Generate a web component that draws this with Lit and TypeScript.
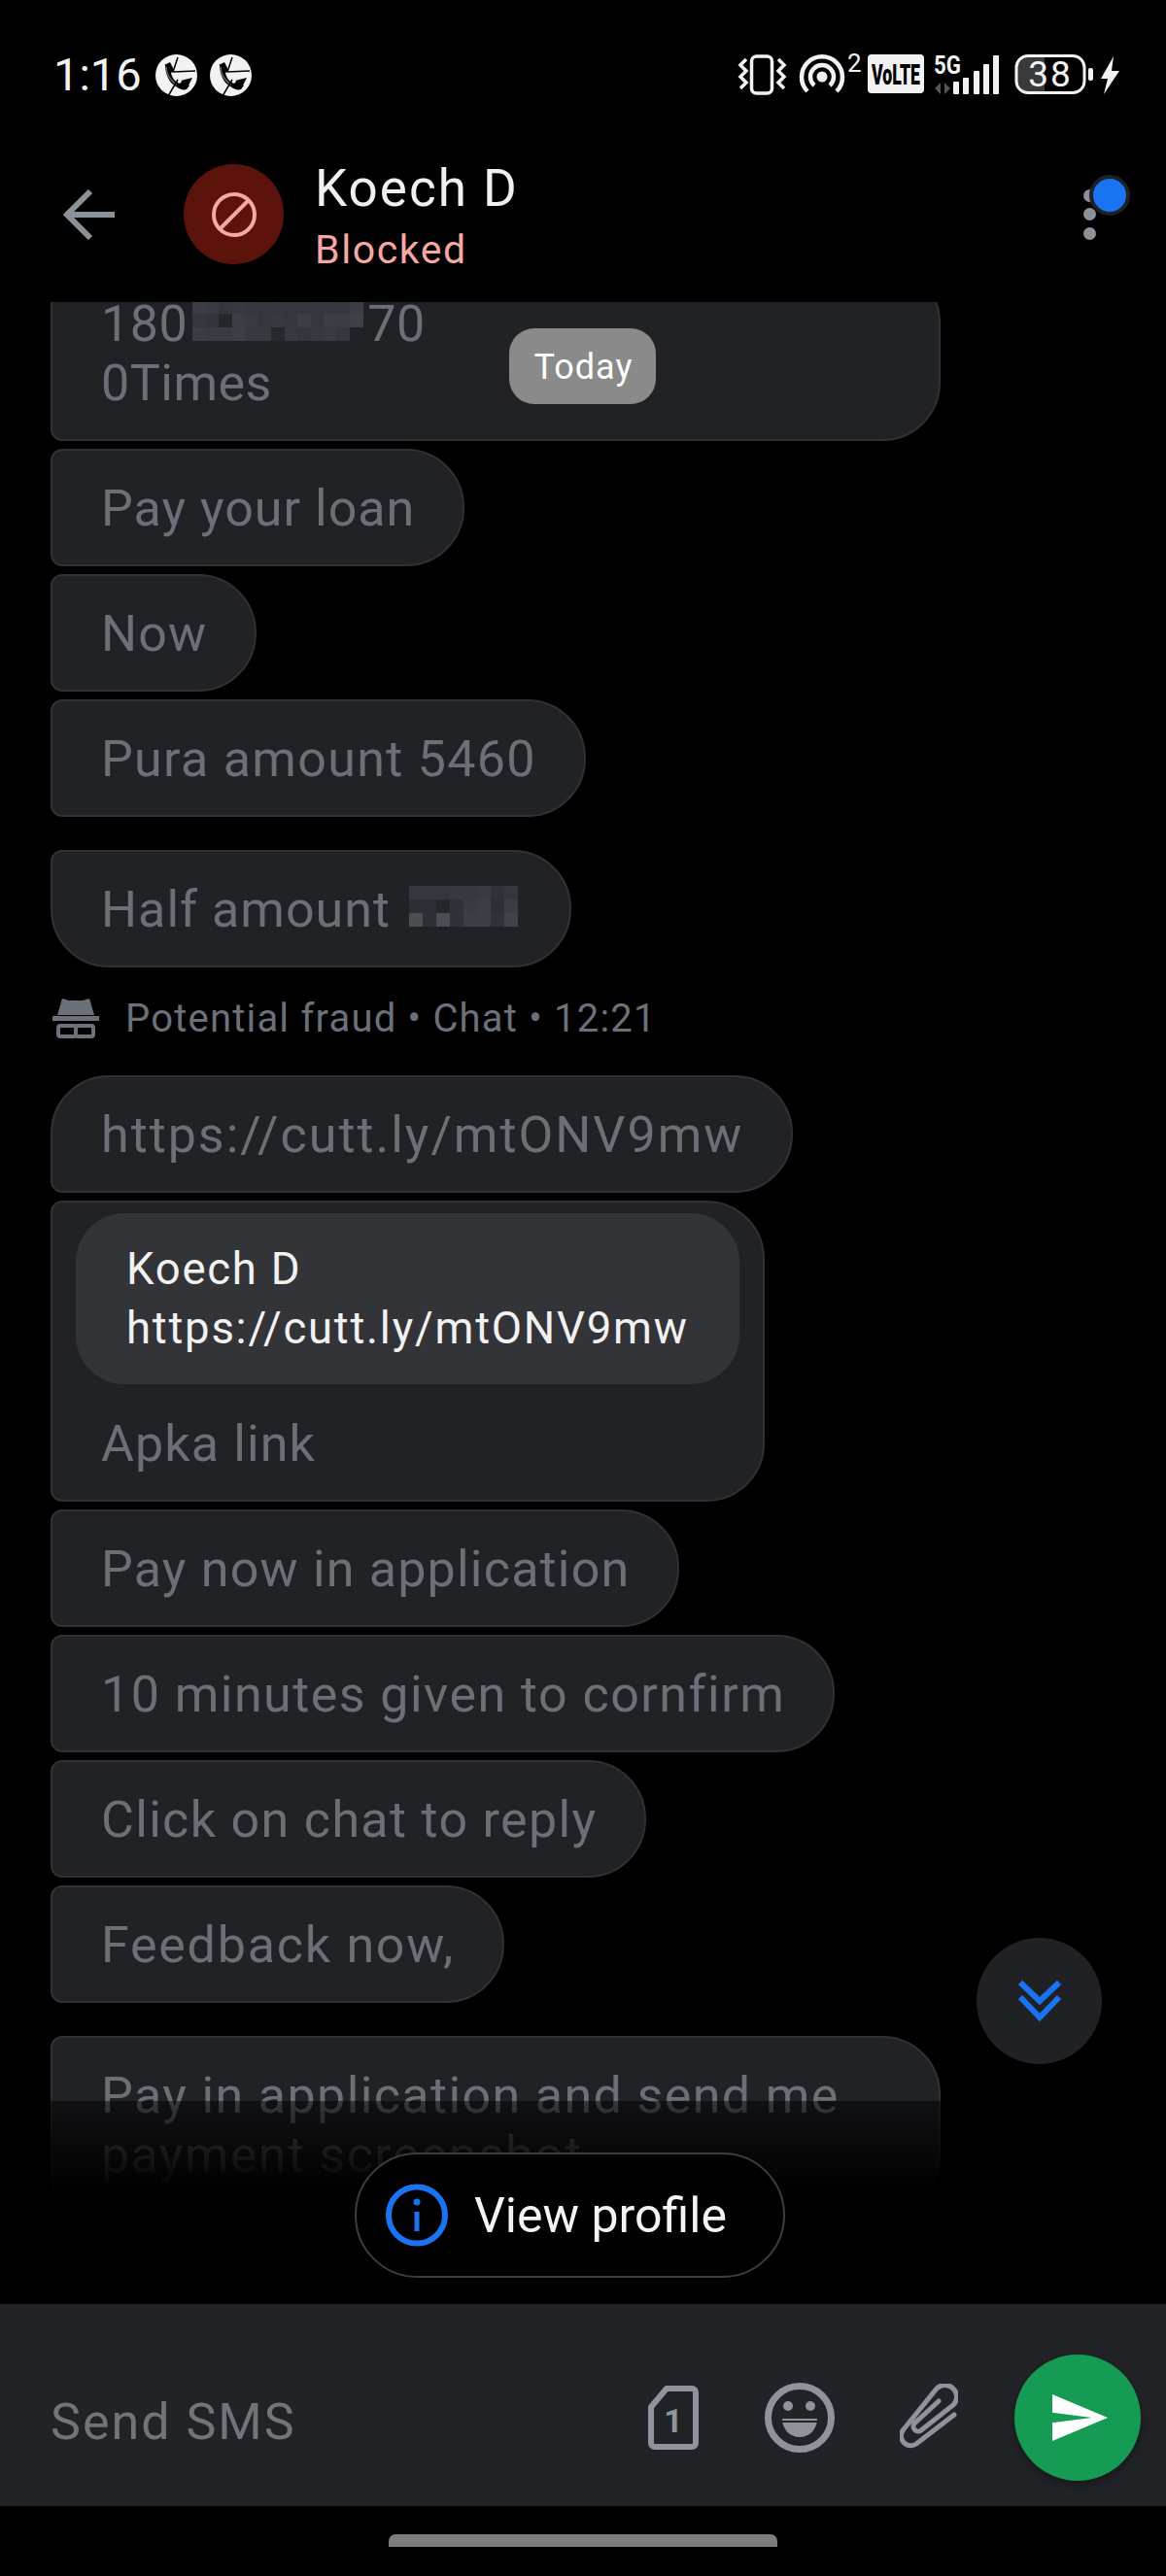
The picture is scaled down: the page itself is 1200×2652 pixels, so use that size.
import { LitElement, html, svg, css } from 'lit';
import { customElement } from 'lit/decorators.js';

type Shape = 'mid' | 'last' | 'first';

const MOSAIC_LONG = [
  '#3a3d44 #383b42 #34373d #36393f #34373d #33363c #34373d #33363c #33363c #34373d #34373d #33363c #3a3d44',
  '#34373d #33353a #26272b #3b3e45 #383b42 #33363c #36393f #33363c #3b3e45 #33363c #3b3e45 #3a3d44 #3e4148',
  '#3a3d44 #383b42 #383b42 #3b3e45 #36393f #36393f #26282c #36393f #33363c #36393f #383b42 #34373d #202226',
];
const MOSAIC_SHORT = [
  '#34373d #34373d #33363c #36393f #36393f #383b42 #2f3238 #33363c',
  '#2b2e33 #2d2f34 #26272b #2f3238 #383b42 #3b3e45 #2d2f34 #3a3d44',
  '#4a4e55 #2d2f34 #4a4e55 #2f3238 #3b3e45 #3b3e45 #2f3238 #40434a',
];

// redacted digits in the screenshot, drawn as a grid of flat cells
function mosaic(rows: string[], width: number) {
  const cells = rows.map((r) => r.split(' '));
  const w = cells[0].length * 14;
  return html`<svg class="mosaic" width=${width} height="42" viewBox="0 0 ${w} 42" preserveAspectRatio="none" shape-rendering="crispEdges">
    ${cells.map((row, y) =>
      row.map((c, x) => svg`<rect x=${x * 14} y=${y * 14} width="14" height="14" fill=${c}></rect>`)
    )}
  </svg>`;
}

const callIcon = html`<svg width="43" height="43" viewBox="0 0 43 43">
  <circle cx="21.5" cy="21.5" r="21.5" fill="#f2f2f2"></circle>
  <path d="M9 11l6-3 4 8-3 3c1 5 4 9 9 11l3-3 7 5-3 4c-3 1-7 0-11-3-7-4-11-13-11-22z" fill="#000"></path>
  <path d="M11 13c0 7 5 15 11 18" fill="none" stroke="#f2f2f2" stroke-width="1.5" opacity="0.4"></path>
  <path d="M23 3l-5 15 23-1M23 26L13 43" fill="none" stroke="#000" stroke-width="1.5"></path>
  <path d="M26 27l12-3-4 8z" fill="#000"></path>
</svg>`;

@customElement('app-root')
export class AppRoot extends LitElement {
  static styles = css`
    :host {
      display: flex;
      flex-direction: column;
      width: 1200px;
      height: 2652px;
      background: #000;
      overflow: hidden;
      font-family: Roboto, 'Noto Sans', sans-serif;
    }

    .status {
      height: 130px;
      flex: none;
      display: flex;
      align-items: flex-start;
      justify-content: space-between;
      padding: 55px 41px 0 55px;
      box-sizing: border-box;
      color: #f2f2f2;
    }
    .status-left {
      display: flex;
      align-items: center;
      gap: 13px;
      height: 44px;
    }
    .time {
      font-size: 47px;
      line-height: 44px;
      margin-right: 1px;
    }

    .header {
      height: 181px;
      flex: none;
      display: flex;
      align-items: center;
      padding-left: 65px;
      box-sizing: border-box;
      position: relative;
    }
    .avatar {
      width: 103px;
      height: 103px;
      border-radius: 50%;
      background: #5c130c;
      display: flex;
      align-items: center;
      justify-content: center;
      margin: 0 32px 0 71px;
    }
    .title {
      padding-top: 6px;
    }
    .name {
      font-size: 53px;
      line-height: 60px;
      letter-spacing: 2px;
      color: #f1f1f1;
    }
    .blocked {
      font-size: 41px;
      line-height: 54px;
      margin-top: 6px;
      color: #f5a9a0;
      letter-spacing: 1.6px;
    }
    .menu {
      position: absolute;
      right: 0;
      top: 0;
      width: 100px;
      height: 130px;
    }
    .dot {
      position: absolute;
      left: 15px;
      width: 13px;
      height: 13px;
      border-radius: 50%;
      background: #8b9299;
    }
    .badge {
      position: absolute;
      left: 21px;
      top: 50px;
      width: 34px;
      height: 34px;
      border-radius: 50%;
      background: #1a73f0;
      border: 4px solid #1f2125;
    }

    .messages {
      flex: 1;
      min-height: 0;
      position: relative;
      overflow: hidden;
    }
    .list {
      display: flex;
      flex-direction: column;
      align-items: flex-start;
      gap: 8px;
      padding-left: 52px;
      margin-top: -39px;
    }
    .bubble {
      box-sizing: border-box;
      background: #202226;
      border: 2px solid #303134;
      padding: 29px 49px 27px 50px;
      font-size: 52px;
      line-height: 61px;
      letter-spacing: 1.1px;
      color: #6b7078;
      white-space: nowrap;
      border-radius: 12px 60px 60px 12px;
    }
    .bubble.first {
      border-radius: 60px 60px 60px 12px;
    }
    .bubble.last {
      border-radius: 12px 60px 60px 60px;
      margin-top: 26px;
    }
    .bubble.wide {
      width: 916px;
    }
    .bubble.tail {
      margin-top: 26px;
    }
    .bubble.reply {
      padding: 11px 24px 27px 24px;
    }
    .quote {
      background: #333437;
      border-radius: 50px;
      padding: 27px 52px 27px 52px;
      margin-bottom: 31px;
      font-size: 45.5px;
      letter-spacing: 1.75px;
      color: #f1f1f1;
    }
    .reply-text {
      padding-left: 26px;
    }
    .mosaic {
      margin: 0 4px 0 5px;
    }
    .label {
      display: flex;
      align-items: center;
      gap: 27px;
      height: 48px;
      margin: 20px 0 27px 2px;
      font-size: 40px;
      letter-spacing: 1.2px;
      color: #6c7179;
    }

    .today {
      position: absolute;
      left: 524px;
      top: 27px;
      width: 151px;
      height: 78px;
      box-sizing: border-box;
      padding: 2px 0 0 2px;
      border-radius: 26px;
      background: #8a8a8a;
      color: #fff;
      font-size: 36px;
      letter-spacing: 1px;
      display: flex;
      align-items: center;
      justify-content: center;
    }
    .fade {
      position: absolute;
      left: 0;
      right: 0;
      top: 1852px;
      height: 209px;
      background: linear-gradient(rgba(0, 0, 0, 0.5), #000 95px);
    }
    .scroll-down {
      position: absolute;
      left: 1005px;
      top: 1684px;
      width: 129px;
      height: 130px;
      border-radius: 50%;
      background: #1f2125;
      display: flex;
      align-items: center;
      justify-content: center;
    }
    .profile {
      position: absolute;
      left: 365px;
      top: 1905px;
      width: 443px;
      height: 129px;
      box-sizing: border-box;
      background: #000;
      border: 2px solid #3c3d3f;
      border-radius: 65px;
      display: flex;
      align-items: center;
      gap: 27px;
      padding-left: 30px;
      color: #f4f4f4;
      font-size: 50px;
    }

    .composer {
      height: 208px;
      flex: none;
      box-sizing: border-box;
      background: #212327;
      display: flex;
      align-items: center;
      padding: 26px 26px 0 52px;
    }
    .placeholder {
      flex: 1;
      font-size: 52px;
      letter-spacing: 2px;
      color: #70757c;
      margin-top: 8px;
    }
    .sim {
      margin-right: 68px;
    }
    .emoji {
      margin-right: 67px;
    }
    .clip {
      margin-right: 58px;
    }
    .send {
      width: 130px;
      height: 130px;
      border-radius: 50%;
      background: #169b54;
      box-shadow: 0 4px 10px rgba(0, 0, 0, 0.35);
      display: flex;
      align-items: center;
      justify-content: center;
      padding-left: 4px;
      box-sizing: border-box;
    }
    .nav {
      height: 72px;
      flex: none;
      box-sizing: border-box;
      display: flex;
      justify-content: center;
      padding-top: 29px;
    }
    .home {
      width: 400px;
      height: 13px;
      border-radius: 7px 7px 0 0;
      background: #7c7c7c;
    }
  `;

  private _statusIcons() {
    return html`<svg width="400" height="44" viewBox="0 0 400 44">
      <g fill="none" stroke="#f2f2f2">
        <rect x="14.5" y="3" width="21" height="38" rx="5" stroke-width="3.5"></rect>
        <path d="M9 6l-6 6 6 6-6 6 6 6-6 6M42 6l6 6-6 6 6 6-6 6 6 6" stroke-width="3.5"></path>
        <path d="M72 39a21 21 0 1 1 30 0M79 33a12 12 0 1 1 16 0" stroke-width="4.5"></path>
      </g>
      <circle cx="87" cy="24" r="5.5" fill="#f2f2f2"></circle>
      <text x="113" y="19" font-size="26" fill="#f2f2f2">2</text>
      <rect x="134" y="1" width="58" height="40" rx="4" fill="#f2f2f2"></rect>
      <text x="163" y="32" font-size="29" font-weight="900" text-anchor="middle" textLength="50" lengthAdjust="spacingAndGlyphs" fill="#000">VoLTE</text>
      <text x="202" y="21" font-size="25" font-weight="700" textLength="28" lengthAdjust="spacingAndGlyphs" fill="#f2f2f2">5G</text>
      <path d="M209 30v12l-6-6zM213 30v12l6-6z" fill="#555"></path>
      <g fill="#f2f2f2">
        <rect x="222" y="29" width="6" height="13" rx="1"></rect>
        <rect x="232" y="25" width="6" height="17" rx="1"></rect>
        <rect x="243" y="18" width="6" height="24" rx="1"></rect>
        <rect x="253" y="11" width="6" height="31" rx="1"></rect>
        <rect x="263" y="2" width="6" height="40" rx="1"></rect>
      </g>
      <path d="M297 3h19v36h-19a11 11 0 0 1-11-11v-14a11 11 0 0 1 11-11z" fill="#3a3a3a"></path>
      <rect x="287" y="2.5" width="70" height="38" rx="12" fill="none" stroke="#f2f2f2" stroke-width="3"></rect>
      <text x="322" y="34" font-size="37" text-anchor="middle" letter-spacing="2" fill="#f2f2f2">38</text>
      <rect x="361" y="15" width="5" height="13" rx="2" fill="#f2f2f2"></rect>
      <path d="M387 3l-13 23h7l-4 16 16-24h-8z" fill="#f2f2f2"></path>
    </svg>`;
  }

  private _bubble(text: unknown, tracking = 1.1, shape: Shape = 'mid', extra = '') {
    return html`<div class="bubble ${shape} ${extra}" style="letter-spacing:${tracking}px">${text}</div>`;
  }

  render() {
    return html`
      <div class="status">
        <div class="status-left">
          <span class="time">1:16</span>
          ${callIcon} ${callIcon}
        </div>
        ${this._statusIcons()}
      </div>

      <div class="header">
        <svg width="53" height="52" viewBox="0 0 53 52" fill="none" stroke="#8b9299" stroke-width="6">
          <path d="M53 26H5M28 2L4 26l24 24"></path>
        </svg>
        <div class="avatar">
          <svg width="46" height="46" viewBox="0 0 46 46" fill="none" stroke="#f5a9a0" stroke-width="4">
            <circle cx="23" cy="23" r="21"></circle>
            <path d="M8 38L38 8"></path>
          </svg>
        </div>
        <div class="title">
          <div class="name">Koech D</div>
          <div class="blocked">Blocked</div>
        </div>
        <div class="menu">
          <span class="dot" style="top:65px"></span>
          <span class="dot" style="top:84px"></span>
          <span class="dot" style="top:104px"></span>
          <span class="badge"></span>
        </div>
      </div>

      <div class="messages">
        <div class="list">
          ${this._bubble(html`180${mosaic(MOSAIC_LONG, 176)}70<br />0Times`, 0.5, 'mid', 'wide')}
          ${this._bubble('Pay your loan', 1)}
          ${this._bubble('Now')}
          ${this._bubble('Pura amount 5460', 1.3)}
          ${this._bubble(html`Half amount ${mosaic(MOSAIC_SHORT, 112)}`, 1, 'last')}
          <div class="label">
            <svg width="48" height="42" viewBox="0 0 48 42" fill="#6c7179">
              <path d="M10 1l7 2h14l7-2 5 17H5z"></path>
              <rect x="0" y="19" width="48" height="5"></rect>
              <g fill="none" stroke="#6c7179" stroke-width="4">
                <rect x="6" y="29" width="18" height="11" rx="2"></rect>
                <rect x="24" y="29" width="18" height="11" rx="2"></rect>
              </g>
            </svg>
            <span>Potential fraud • Chat • 12:21</span>
          </div>
          ${this._bubble('https://cutt.ly/mtONV9mw', 2, 'first')}
          <div class="bubble reply">
            <div class="quote">Koech D<br />https://cutt.ly/mtONV9mw</div>
            <div class="reply-text">Apka link</div>
          </div>
          ${this._bubble('Pay now in application', 1.2)}
          ${this._bubble('10 minutes given to cornfirm', 1.46)}
          ${this._bubble('Click on chat to reply', 1.33)}
          ${this._bubble('Feedback now,', 1.75)}
          ${this._bubble(html`Pay in application and send me<br />payment screenshot`, 1.38, 'mid', 'wide tail')}
        </div>

        <div class="today">Today</div>
        <div class="fade"></div>
        <div class="scroll-down">
          <svg width="46" height="46" viewBox="0 0 46 46" fill="none" stroke="#1a73f0" stroke-width="6">
            <path d="M3 4l20 19L43 4M3 19l20 21 20-21"></path>
          </svg>
        </div>
        <div class="profile">
          <svg width="64" height="65" viewBox="0 0 64 65" fill="none" stroke="#1a73f0" stroke-width="6">
            <circle cx="32" cy="32.5" r="29"></circle>
            <path d="M32 29v20" stroke-width="5"></path>
            <circle cx="32" cy="19" r="3.5" fill="#1a73f0" stroke="none"></circle>
          </svg>
          <span>View profile</span>
        </div>
      </div>

      <div class="composer">
        <span class="placeholder">Send SMS</span>
        <svg class="sim" width="52" height="66" viewBox="0 0 52 66">
          <path d="M19 3h26a4 4 0 0 1 4 4v52a4 4 0 0 1-4 4H7a4 4 0 0 1-4-4V22z" fill="none" stroke="#8f949c" stroke-width="6" stroke-linejoin="round"></path>
          <text x="26" y="48" font-size="34" font-weight="700" text-anchor="middle" fill="#8f949c">1</text>
        </svg>
        <svg class="emoji" width="72" height="72" viewBox="0 0 72 72">
          <circle cx="36" cy="36" r="32.5" fill="none" stroke="#8f949c" stroke-width="7"></circle>
          <circle cx="24" cy="24" r="5" fill="#8f949c"></circle>
          <circle cx="47" cy="24" r="5" fill="#8f949c"></circle>
          <path d="M18 37h36c0 11-8 19-18 19s-18-8-18-19z" fill="#8f949c"></path>
          <path d="M18 40h36" stroke="#212327" stroke-width="2"></path>
        </svg>
        <svg class="clip" width="60" height="70" viewBox="275 15 60 70" fill="none" stroke="#8f949c" stroke-width="5" stroke-linecap="round">
          <path d="M331 47L292 77A10 10 0 0 1 279 62L313 20A10 10 0 0 1 330 37L297 63A4 4 0 0 1 291 55L315 33"></path>
        </svg>
        <div class="send">
          <svg width="57" height="48" viewBox="2 3 21 18" preserveAspectRatio="none">
            <path d="M2 21l21-9L2 3v7l15 2-15 2v7z" fill="#fff"></path>
          </svg>
        </div>
      </div>
      <div class="nav"><div class="home"></div></div>
    `;
  }
}
